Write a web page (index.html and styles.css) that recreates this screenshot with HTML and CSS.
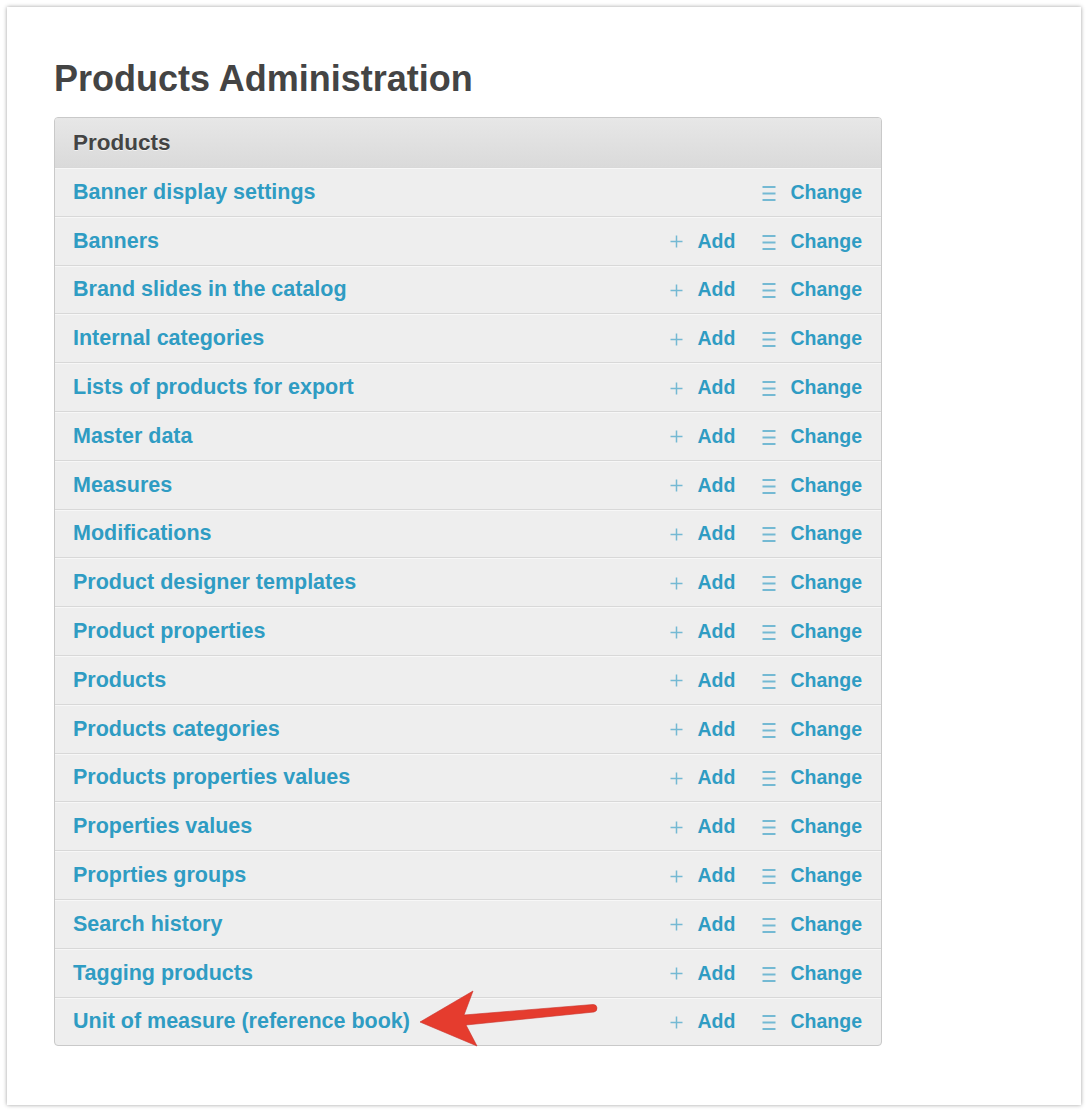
FILE: index.html
```html
<!DOCTYPE html>
<html>
<head>
<meta charset="utf-8">
<title>Products Administration</title>
<link rel="stylesheet" href="styles.css">
</head>
<body>
<div class="card">
  <h1 class="title">Products Administration</h1>
  <div class="module">
    <div class="caption">Products</div>
    <div class="row"><a class="name" href="#">Banner display settings</a><div class="actions"><span class="add empty"></span><a class="change" href="#"><svg class="ic" width="14" height="16" viewBox="0 0 14 16"><path d="M0.5 2h13M0.5 8.5h13M0.5 15h13"/></svg>Change</a></div></div>
    <div class="row"><a class="name" href="#">Banners</a><div class="actions"><a class="add" href="#"><svg class="ic" width="13" height="13" viewBox="0 0 13 13"><path class="thin" d="M6.5 0.5v12M0.5 6.5h12"/></svg>Add</a><a class="change" href="#"><svg class="ic" width="14" height="16" viewBox="0 0 14 16"><path d="M0.5 2h13M0.5 8.5h13M0.5 15h13"/></svg>Change</a></div></div>
    <div class="row"><a class="name" href="#">Brand slides in the catalog</a><div class="actions"><a class="add" href="#"><svg class="ic" width="13" height="13" viewBox="0 0 13 13"><path class="thin" d="M6.5 0.5v12M0.5 6.5h12"/></svg>Add</a><a class="change" href="#"><svg class="ic" width="14" height="16" viewBox="0 0 14 16"><path d="M0.5 2h13M0.5 8.5h13M0.5 15h13"/></svg>Change</a></div></div>
    <div class="row"><a class="name" href="#">Internal categories</a><div class="actions"><a class="add" href="#"><svg class="ic" width="13" height="13" viewBox="0 0 13 13"><path class="thin" d="M6.5 0.5v12M0.5 6.5h12"/></svg>Add</a><a class="change" href="#"><svg class="ic" width="14" height="16" viewBox="0 0 14 16"><path d="M0.5 2h13M0.5 8.5h13M0.5 15h13"/></svg>Change</a></div></div>
    <div class="row"><a class="name" href="#">Lists of products for export</a><div class="actions"><a class="add" href="#"><svg class="ic" width="13" height="13" viewBox="0 0 13 13"><path class="thin" d="M6.5 0.5v12M0.5 6.5h12"/></svg>Add</a><a class="change" href="#"><svg class="ic" width="14" height="16" viewBox="0 0 14 16"><path d="M0.5 2h13M0.5 8.5h13M0.5 15h13"/></svg>Change</a></div></div>
    <div class="row"><a class="name" href="#">Master data</a><div class="actions"><a class="add" href="#"><svg class="ic" width="13" height="13" viewBox="0 0 13 13"><path class="thin" d="M6.5 0.5v12M0.5 6.5h12"/></svg>Add</a><a class="change" href="#"><svg class="ic" width="14" height="16" viewBox="0 0 14 16"><path d="M0.5 2h13M0.5 8.5h13M0.5 15h13"/></svg>Change</a></div></div>
    <div class="row"><a class="name" href="#">Measures</a><div class="actions"><a class="add" href="#"><svg class="ic" width="13" height="13" viewBox="0 0 13 13"><path class="thin" d="M6.5 0.5v12M0.5 6.5h12"/></svg>Add</a><a class="change" href="#"><svg class="ic" width="14" height="16" viewBox="0 0 14 16"><path d="M0.5 2h13M0.5 8.5h13M0.5 15h13"/></svg>Change</a></div></div>
    <div class="row"><a class="name" href="#">Modifications</a><div class="actions"><a class="add" href="#"><svg class="ic" width="13" height="13" viewBox="0 0 13 13"><path class="thin" d="M6.5 0.5v12M0.5 6.5h12"/></svg>Add</a><a class="change" href="#"><svg class="ic" width="14" height="16" viewBox="0 0 14 16"><path d="M0.5 2h13M0.5 8.5h13M0.5 15h13"/></svg>Change</a></div></div>
    <div class="row"><a class="name" href="#">Product designer templates</a><div class="actions"><a class="add" href="#"><svg class="ic" width="13" height="13" viewBox="0 0 13 13"><path class="thin" d="M6.5 0.5v12M0.5 6.5h12"/></svg>Add</a><a class="change" href="#"><svg class="ic" width="14" height="16" viewBox="0 0 14 16"><path d="M0.5 2h13M0.5 8.5h13M0.5 15h13"/></svg>Change</a></div></div>
    <div class="row"><a class="name" href="#">Product properties</a><div class="actions"><a class="add" href="#"><svg class="ic" width="13" height="13" viewBox="0 0 13 13"><path class="thin" d="M6.5 0.5v12M0.5 6.5h12"/></svg>Add</a><a class="change" href="#"><svg class="ic" width="14" height="16" viewBox="0 0 14 16"><path d="M0.5 2h13M0.5 8.5h13M0.5 15h13"/></svg>Change</a></div></div>
    <div class="row"><a class="name" href="#">Products</a><div class="actions"><a class="add" href="#"><svg class="ic" width="13" height="13" viewBox="0 0 13 13"><path class="thin" d="M6.5 0.5v12M0.5 6.5h12"/></svg>Add</a><a class="change" href="#"><svg class="ic" width="14" height="16" viewBox="0 0 14 16"><path d="M0.5 2h13M0.5 8.5h13M0.5 15h13"/></svg>Change</a></div></div>
    <div class="row"><a class="name" href="#">Products categories</a><div class="actions"><a class="add" href="#"><svg class="ic" width="13" height="13" viewBox="0 0 13 13"><path class="thin" d="M6.5 0.5v12M0.5 6.5h12"/></svg>Add</a><a class="change" href="#"><svg class="ic" width="14" height="16" viewBox="0 0 14 16"><path d="M0.5 2h13M0.5 8.5h13M0.5 15h13"/></svg>Change</a></div></div>
    <div class="row"><a class="name" href="#">Products properties values</a><div class="actions"><a class="add" href="#"><svg class="ic" width="13" height="13" viewBox="0 0 13 13"><path class="thin" d="M6.5 0.5v12M0.5 6.5h12"/></svg>Add</a><a class="change" href="#"><svg class="ic" width="14" height="16" viewBox="0 0 14 16"><path d="M0.5 2h13M0.5 8.5h13M0.5 15h13"/></svg>Change</a></div></div>
    <div class="row"><a class="name" href="#">Properties values</a><div class="actions"><a class="add" href="#"><svg class="ic" width="13" height="13" viewBox="0 0 13 13"><path class="thin" d="M6.5 0.5v12M0.5 6.5h12"/></svg>Add</a><a class="change" href="#"><svg class="ic" width="14" height="16" viewBox="0 0 14 16"><path d="M0.5 2h13M0.5 8.5h13M0.5 15h13"/></svg>Change</a></div></div>
    <div class="row"><a class="name" href="#">Proprties groups</a><div class="actions"><a class="add" href="#"><svg class="ic" width="13" height="13" viewBox="0 0 13 13"><path class="thin" d="M6.5 0.5v12M0.5 6.5h12"/></svg>Add</a><a class="change" href="#"><svg class="ic" width="14" height="16" viewBox="0 0 14 16"><path d="M0.5 2h13M0.5 8.5h13M0.5 15h13"/></svg>Change</a></div></div>
    <div class="row"><a class="name" href="#">Search history</a><div class="actions"><a class="add" href="#"><svg class="ic" width="13" height="13" viewBox="0 0 13 13"><path class="thin" d="M6.5 0.5v12M0.5 6.5h12"/></svg>Add</a><a class="change" href="#"><svg class="ic" width="14" height="16" viewBox="0 0 14 16"><path d="M0.5 2h13M0.5 8.5h13M0.5 15h13"/></svg>Change</a></div></div>
    <div class="row"><a class="name" href="#">Tagging products</a><div class="actions"><a class="add" href="#"><svg class="ic" width="13" height="13" viewBox="0 0 13 13"><path class="thin" d="M6.5 0.5v12M0.5 6.5h12"/></svg>Add</a><a class="change" href="#"><svg class="ic" width="14" height="16" viewBox="0 0 14 16"><path d="M0.5 2h13M0.5 8.5h13M0.5 15h13"/></svg>Change</a></div></div>
    <div class="row"><a class="name" href="#">Unit of measure (reference book)</a><div class="actions"><a class="add" href="#"><svg class="ic" width="13" height="13" viewBox="0 0 13 13"><path class="thin" d="M6.5 0.5v12M0.5 6.5h12"/></svg>Add</a><a class="change" href="#"><svg class="ic" width="14" height="16" viewBox="0 0 14 16"><path d="M0.5 2h13M0.5 8.5h13M0.5 15h13"/></svg>Change</a></div></div>
  </div>
</div>
<svg class="arrow" width="210" height="70" viewBox="400 985 210 70">
  <path d="M420 1022 L473 991 L464 1015 L593 1004.5 A3.8 3.8 0 0 1 594 1012 L466 1025 L477 1046 Z"/>
</svg>
</body>
</html>
```

FILE: styles.css
```css
html, body {
  margin: 0;
  padding: 0;
  background: #ffffff;
}

body {
  position: relative;
  width: 1088px;
  height: 1112px;
  font-family: "Liberation Sans", Arial, sans-serif;
}

.card {
  position: relative;
  margin: 7px 0 0 7px;
  width: 1074px;
  height: 1098px;
  box-sizing: border-box;
  padding: 52px 0 0 47px;
  background: #ffffff;
  box-shadow: 0 0 4px rgba(0, 0, 0, 0.38);
}

.title {
  margin: 0 0 18px 0;
  font-size: 36px;
  line-height: 40px;
  font-weight: bold;
  color: #444444;
}

.module {
  width: 828px;
  box-sizing: border-box;
  border: 1px solid #c9c9c9;
  border-radius: 4px;
  background: #eeeeee;
  overflow: hidden;
}

.caption {
  height: 49px;
  box-sizing: border-box;
  padding: 0 18px;
  display: flex;
  align-items: center;
  background: linear-gradient(#e7e7e7, #dadada);
  font-size: 22.5px;
  font-weight: bold;
  color: #444444;
  text-shadow: 0 1px 0 rgba(255, 255, 255, 0.6);
}

.row {
  height: 48.8px;
  box-sizing: border-box;
  border-top: 1px solid #d8d8d8;
  box-shadow: inset 0 1px 0 #f7f7f7;
  padding: 0 19px 0 18px;
  display: flex;
  align-items: center;
  justify-content: space-between;
}

a {
  text-decoration: none;
  color: #2f9cc3;
  font-weight: bold;
}

.name {
  font-size: 21.5px;
  line-height: 26px;
}

.actions {
  display: flex;
  align-items: center;
  gap: 27px;
}

.add, .change {
  display: flex;
  align-items: center;
  font-size: 19.5px;
  line-height: 24px;
}

.add {
  width: 65px;
  gap: 14px;
}

.change {
  gap: 14px;
}

.ic {
  display: block;
  fill: none;
  stroke: #74b9d3;
  stroke-width: 2;
}

.ic .thin {
  stroke-width: 1.5;
}

.add .ic {
  margin-top: 2px;
}

.change .ic {
  margin-top: 2px;
}

.arrow {
  position: absolute;
  left: 400px;
  top: 985px;
  fill: #e53c2e;
  stroke: #c9302a;
  stroke-width: 0.6;
}
```
